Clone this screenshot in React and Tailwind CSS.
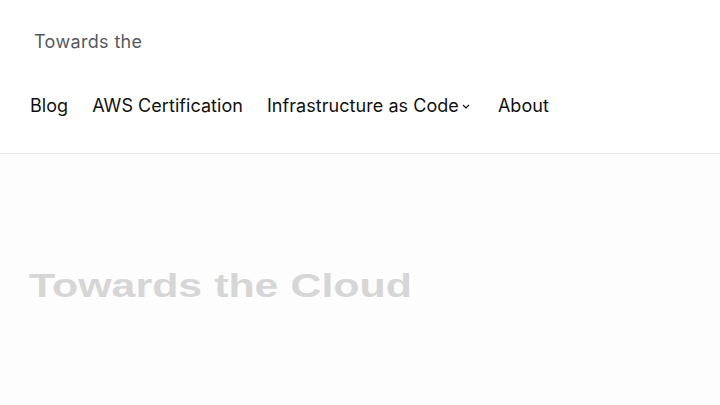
import React from 'react';

const NavItem = ({ label, hasMenu }) => (
  <a href="#" className="flex items-center gap-[3px] text-[18px] tracking-[0.05px] text-[#111111]">
    {label}
    {hasMenu && (
      <svg width="12" height="12" viewBox="0 0 12 12" className="mt-[2px]">
        <path d="M1 4 L4 7 L7 4" fill="none" stroke="#111" strokeWidth="1.2" />
      </svg>
    )}
  </a>
);

export default function App() {
  return (
    <div className="min-h-[405px] w-[720px] overflow-hidden bg-[#fdfdfd] font-['Inter',sans-serif]">
      <header className="bg-white border-b border-[#e6e6e6]">
        <div className="pt-[30px] pl-[34px] text-[18px] leading-[24px] tracking-[0.35px] text-[#555a60]">Towards the</div>
        <nav className="flex items-center gap-[24px] pl-[30px] pt-[40px] pb-[35px] leading-[24px]">
          <NavItem label="Blog" />
          <NavItem label="AWS Certification" />
          <NavItem label="Infrastructure as Code" hasMenu />
          <NavItem label="About" />
        </nav>
      </header>
      <main className="pt-[112px] pl-[29px]">
        <h1 className="w-fit origin-left scale-x-[1.3] font-['Liberation_Sans',sans-serif] text-[33px] leading-[40px] font-bold text-[#d6d6d6]">
          Towards the Cloud
        </h1>
      </main>
    </div>
  );
}
